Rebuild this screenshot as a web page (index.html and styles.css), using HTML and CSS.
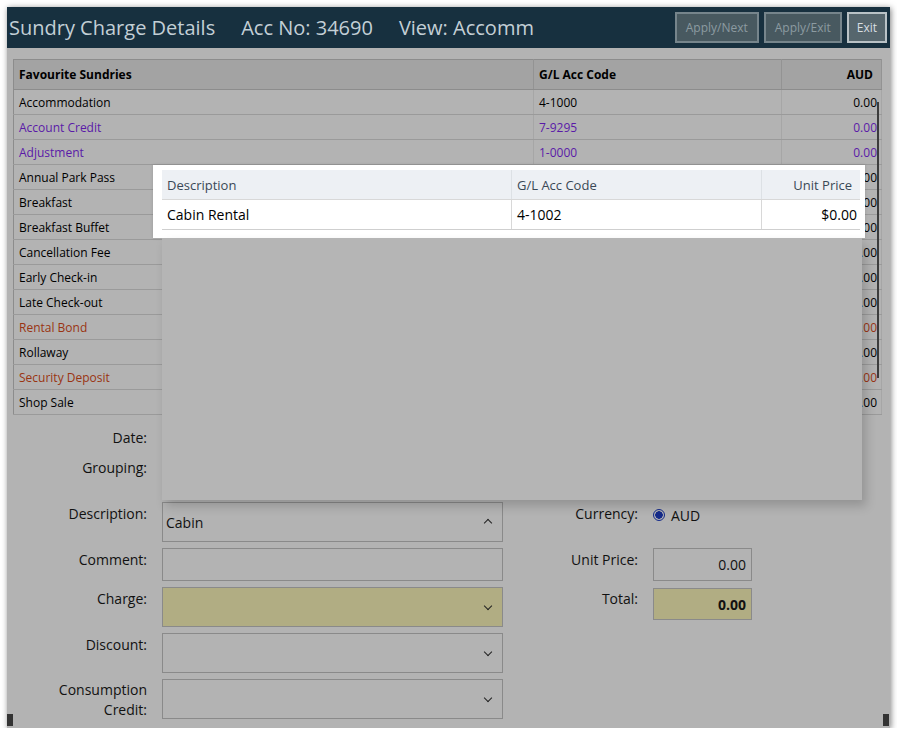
FILE: index.html
```html
<!DOCTYPE html>
<html lang="en">
<head>
    <meta charset="UTF-8">
    <title>Sundry Charge Details</title>
    <link rel="stylesheet" href="styles.css">
</head>
<body>
    <div class="window">
        <div class="titlebar">
            <div class="title">
                <span>Sundry Charge Details</span>
                <span>Acc No: 34690</span>
                <span>View: Accomm</span>
            </div>
            <div class="actions">
                <button class="btn off">Apply/Next</button>
                <button class="btn off">Apply/Exit</button>
                <button class="btn exit">Exit</button>
            </div>
        </div>

        <div class="content">
            <table class="sundries">
                <thead>
                    <tr><th class="c1">Favourite Sundries</th><th class="c2">G/L Acc Code</th><th class="c3">AUD</th></tr>
                </thead>
                <tbody>
                    <tr><td>Accommodation</td><td>4-1000</td><td class="num">0.00</td></tr>
                    <tr class="credit"><td>Account Credit</td><td>7-9295</td><td class="num">0.00</td></tr>
                    <tr class="credit"><td>Adjustment</td><td>1-0000</td><td class="num">0.00</td></tr>
                    <tr><td>Annual Park Pass</td><td></td><td class="num">0.00</td></tr>
                    <tr><td>Breakfast</td><td></td><td class="num">0.00</td></tr>
                    <tr><td>Breakfast Buffet</td><td></td><td class="num">0.00</td></tr>
                    <tr><td>Cancellation Fee</td><td></td><td class="num">0.00</td></tr>
                    <tr><td>Early Check-in</td><td></td><td class="num">0.00</td></tr>
                    <tr><td>Late Check-out</td><td></td><td class="num">0.00</td></tr>
                    <tr class="bond"><td>Rental Bond</td><td></td><td class="num">0.00</td></tr>
                    <tr><td>Rollaway</td><td></td><td class="num">0.00</td></tr>
                    <tr class="bond"><td>Security Deposit</td><td></td><td class="num">0.00</td></tr>
                    <tr><td>Shop Sale</td><td></td><td class="num">0.00</td></tr>
                </tbody>
            </table>
            <div class="scrollbar"></div>

            <div class="form">
                <label class="lbl r1">Date:</label>
                <label class="lbl r2">Grouping:</label>

                <label class="lbl r3">Description:</label>
                <div class="field r3">Cabin <span class="chev up"></span></div>

                <label class="lbl r4">Comment:</label>
                <div class="field r4"></div>

                <label class="lbl r5">Charge:</label>
                <div class="field khaki r5"><span class="chev"></span></div>

                <label class="lbl r6">Discount:</label>
                <div class="field r6"><span class="chev"></span></div>

                <label class="lbl two r7">Consumption<br>Credit:</label>
                <div class="field r7"><span class="chev"></span></div>

                <label class="lbl side r3">Currency:</label>
                <div class="radio-row side r3"><span class="radio"></span>AUD</div>

                <label class="lbl side r4">Unit Price:</label>
                <div class="field small num side r4">0.00</div>

                <label class="lbl side r5">Total:</label>
                <div class="field small khaki num bold side r5">0.00</div>
            </div>

            <!-- lookup dropdown for description -->
            <div class="popup">
                <div class="popup-list">
                    <table>
                        <tr><th class="p1">Description</th><th class="p2">G/L Acc Code</th><th class="p3">Unit Price</th></tr>
                        <tr><td>Cabin Rental</td><td>4-1002</td><td class="num">$0.00</td></tr>
                    </table>
                </div>
                <div class="popup-rest"></div>
            </div>
        </div>

        <div class="grip left"></div>
        <div class="grip right"></div>
    </div>
</body>
</html>
```

FILE: styles.css
```css
body {
    margin: 0;
    background: #ffffff;
    font-family: "Open Sans", "Noto Sans", sans-serif;
}

.window {
    position: relative;
    margin: 7px 0 0 7px;
    width: 883px;
    height: 721px;
    background: #b3b3b3;
    box-shadow: 1px 1px 6px rgba(0, 0, 0, 0.5);
}

.titlebar {
    height: 41px;
    background: #17303f;
    display: flex;
    justify-content: space-between;
    align-items: center;
}

.title {
    display: flex;
    gap: 26px;
    padding-left: 2px;
    color: #c3cfd6;
    font-size: 20px;
}

.actions {
    display: flex;
    gap: 5px;
    padding-right: 3px;
}

.btn {
    height: 31px;
    padding: 0 9px;
    font-family: inherit;
    font-size: 12px;
    border: 2px solid #76858c;
    background: #485960;
    color: #8c9ba1;
}

.btn.exit {
    padding: 0 8px;
    border-color: #b9c2c6;
    background: #56666d;
    color: #d8dfe2;
}

.content {
    position: relative;
    padding: 11px 0 0 6px;
}

.sundries {
    border-collapse: collapse;
    width: 869px;
    border: 1px solid #8c8c8c;
    font-size: 12px;
}

.sundries th {
    height: 29px;
    background: #a3a3a3;
    text-align: left;
    font-weight: bold;
    padding: 0 5px;
    border-right: 1px solid #939393;
    border-bottom: 1px solid #8c8c8c;
}

.sundries .c1 { width: 509px; }
.sundries .c2 { width: 237px; }
.sundries .c3 { text-align: right; padding-right: 8px; }

.sundries td {
    height: 24px;
    padding: 0 5px;
    border-bottom: 1px solid #9a9a9a;
    border-right: 1px solid #a6a6a6;
    color: #000;
}

.sundries td.num {
    text-align: right;
    padding-right: 4px;
}

.sundries tr.credit td { color: #5a1aa8; }
.sundries tr.bond td { color: #9a3412; }

.scrollbar {
    position: absolute;
    left: 870px;
    top: 54px;
    width: 2px;
    height: 276px;
    background: #3c3c3c;
}

/* form grid: label | field | label | field */
.form {
    display: grid;
    grid-template-columns: 134px 341px 120px 99px;
    grid-template-rows: 24px 38px 40px 33px 40px 40px 40px;
    column-gap: 15px;
    row-gap: 6px;
    margin-top: 13px;
    font-size: 14px;
    color: #111;
}

.r1 { grid-row: 1; }
.r2 { grid-row: 2; }
.r3 { grid-row: 3; }
.r4 { grid-row: 4; }
.r5 { grid-row: 5; }
.r6 { grid-row: 6; }
.r7 { grid-row: 7; }

.lbl {
    grid-column: 1;
    text-align: right;
    line-height: 19px;
    padding-top: 2px;
}

.lbl.r1, .lbl.r2 { padding-top: 0; }

.lbl.two { line-height: 20px; padding-top: 1px; }

.field {
    grid-column: 2;
    position: relative;
    border: 1px solid #8a8a8a;
    box-sizing: border-box;
    line-height: 39px;
    padding: 0 3px;
}

.lbl.side { grid-column: 3; }
.side { grid-column: 4; }

.field.small {
    line-height: 32px;
    padding-right: 5px;
}

.field.small.r5 { height: 32px; margin-top: 1px; line-height: 31px; }

.field.khaki { background: #b1ad83; }
.field.num { text-align: right; }
.field.bold { font-weight: bold; }

.chev {
    position: absolute;
    right: 11px;
    top: 15px;
    width: 5px;
    height: 5px;
    border-right: 1.5px solid #222;
    border-bottom: 1.5px solid #222;
    transform: rotate(45deg);
}

.chev.up {
    top: 17px;
    transform: rotate(225deg);
}

.radio-row {
    display: flex;
    align-items: center;
    gap: 6px;
    height: 26px;
}

.radio {
    width: 10px;
    height: 10px;
    border: 1.5px solid #142a8a;
    border-radius: 50%;
    background: radial-gradient(circle, #142a8a 0 3.5px, transparent 4px);
}

.popup {
    position: absolute;
    left: 146px;
    top: 117px;
    width: 712px;
}

.popup-list {
    background: #ffffff;
    padding: 5px 5px 8px 9px;
    box-shadow: 0 0 3px rgba(0, 0, 0, 0.15);
}

.popup-list table {
    border-collapse: collapse;
    width: 698px;
    font-size: 13px;
}

.popup-list th {
    height: 29px;
    background: #edf0f4;
    color: #3a4856;
    font-weight: normal;
    text-align: left;
    padding: 0 5px;
    border-right: 1px solid #dde1e5;
    border-bottom: 1px solid #d8d8d8;
}

.popup-list .p1 { width: 339px; }
.popup-list .p2 { width: 239px; }
.popup-list .p3 { text-align: right; padding-right: 8px; border-right: none; }

.popup-list td {
    height: 29px;
    font-size: 14px;
    padding: 0 5px;
    border-right: 1px solid #d8d8d8;
    border-bottom: 1px solid #cfcfcf;
}

.popup-list td.num { text-align: right; padding-right: 3px; border-right: none; }

.popup-rest {
    margin: 0 3px 0 9px;
    height: 262px;
    background: #b5b5b5;
    box-shadow: 4px 6px 10px rgba(0, 0, 0, 0.18);
}

.grip {
    position: absolute;
    bottom: 2px;
    width: 6px;
    height: 12px;
    background: #333;
}

.grip.left { left: 0; }
.grip.right { right: 1px; }
```
